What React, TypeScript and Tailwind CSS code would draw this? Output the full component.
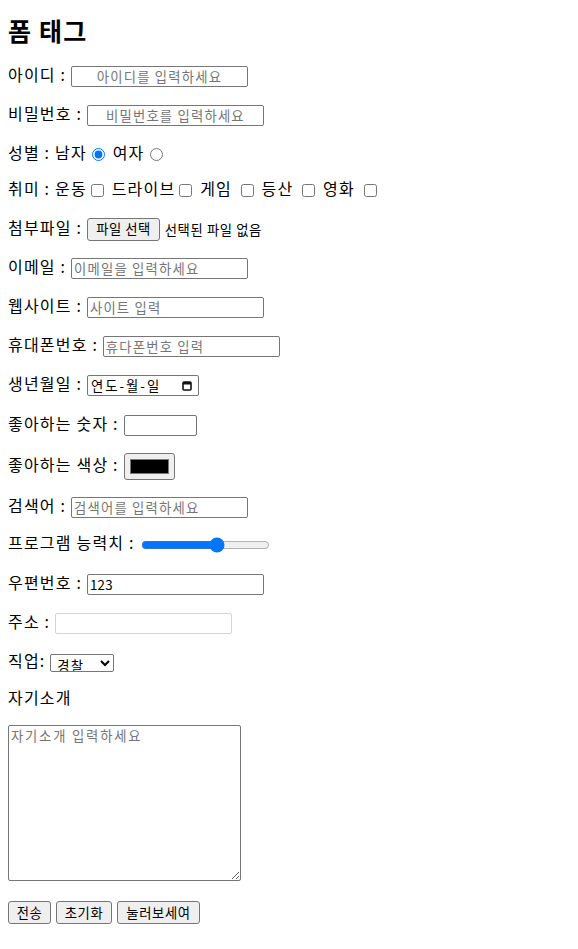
import React from 'react';

const field =
  'align-middle h-[21px] border border-[#767676] rounded-[2px] px-[2px] text-[13.33px] leading-[17px] bg-white placeholder:text-[#757575]';
const btn =
  'align-middle h-[23px] px-[6px] border border-[#767676] rounded-[3px] bg-[#efefef] text-[13.33px] leading-[19px]';
const row = 'h-6 leading-6 whitespace-nowrap';
const check = 'align-middle w-[13px] h-[13px] ml-[4px] mr-[3px]';
const radio = 'align-middle w-[13px] h-[13px] ml-[5px] mr-[3px]';

function CalendarIcon() {
  return (
    <svg width="10" height="11" viewBox="0 0 10 11" className="inline-block">
      <rect x="1" y="2" width="8" height="8" rx="1" fill="none" stroke="#111" strokeWidth="1.6" />
      <rect x="1" y="2" width="8" height="2.5" fill="#111" />
    </svg>
  );
}

export default function App() {
  return (
    <div className="min-h-[949px] bg-white px-2 text-[16px] tracking-[1.2px] text-black font-['Noto_Sans_CJK_KR','Noto_Sans',sans-serif]">
      <h1 className="pt-[15px] text-[25px] font-bold leading-[30px]">폼 태그</h1>

      <form onSubmit={(e) => e.preventDefault()}>
        {/* 텍스트 입력 */}
        <div className={`${row} mt-[17px]`}>
          아이디 :{' '}
          <input className={`${field} w-[177px] text-center`} placeholder="아이디를 입력하세요" />
        </div>
        <div className={`${row} mt-[15px]`}>
          비밀번호 :{' '}
          <input type="password" className={`${field} w-[177px] text-center`} placeholder="비밀번호를 입력하세요" />
        </div>

        {/* 선택 */}
        <div className={`${row} mt-[15px]`}>
          성별 : 남자
          <input type="radio" name="gender" defaultChecked className={radio} /> 여자
          <input type="radio" name="gender" className={radio} />
        </div>
        <div className={`${row} mt-[12px]`}>
          취미 : 운동<input type="checkbox" className={check} /> 드라이브
          <input type="checkbox" className={check} /> 게임 <input type="checkbox" className={check} /> 등산{' '}
          <input type="checkbox" className={check} /> 영화 <input type="checkbox" className={check} />
        </div>
        <div className={`${row} mt-[15px]`}>
          첨부파일 :{' '}
          <span className={`${btn} inline-block h-[22px] w-[73px] text-center tracking-[0.5px]`}>파일 선택</span>{' '}
          <span className="align-middle text-[13.33px] tracking-[0.6px]">선택된 파일 없음</span>
        </div>

        {/* 형식 입력 */}
        <div className={`${row} mt-[15px]`}>
          이메일 :{' '}
          <input type="email" className={`${field} w-[177px]`} placeholder="이메일을 입력하세요" />
        </div>
        <div className={`${row} mt-[15px]`}>
          웹사이트 :{' '}
          <input type="url" className={`${field} w-[177px]`} placeholder="사이트 입력" />
        </div>
        <div className={`${row} mt-[15px]`}>
          휴대폰번호 :{' '}
          <input type="tel" className={`${field} w-[177px]`} placeholder="휴다폰번호 입력" />
        </div>
        <div className={`${row} mt-[15px]`}>
          생년월일 :{' '}
          <span className={`${field} inline-flex w-[112px] items-center justify-between pl-[3px] pr-[6px] tracking-[2px]`}>
            <span>연도-월-일</span>
            <CalendarIcon />
          </span>
        </div>
        <div className={`${row} mt-[16px]`}>
          좋아하는 숫자 : <input type="number" className={`${field} w-[73px]`} />
        </div>
        <div className={`${row} mt-[17px]`}>
          좋아하는 색상 :{' '}
          <span className="inline-flex h-[27px] w-[51px] items-center justify-center rounded-[3px] border border-[#767676] bg-[#efefef] align-middle">
            <span className="h-[15px] w-[39px] border border-[#777] bg-black" />
          </span>
        </div>
        <div className={`${row} mt-[17px]`}>
          검색어 :{' '}
          <input type="search" className={`${field} w-[177px]`} placeholder="검색어를 입력하세요" />
        </div>
        <div className={`${row} mt-[13px]`}>
          프로그램 능력치 :{' '}
          <input type="range" defaultValue={60} className="align-middle mx-[2px] w-[129px] accent-[#0075ff]" />
        </div>
        <div className={`${row} mt-[16px]`}>
          우편번호 : <input className={`${field} w-[177px] tracking-[0.3px]`} defaultValue="123" />
        </div>
        <div className={`${row} mt-[15px]`}>
          주소 :{' '}
          <input disabled className={`${field} w-[177px] border-[#d4d4d4] bg-[#f8f8f8]`} />
        </div>
        <div className={`${row} mt-[15px]`}>
          직업:{' '}
          <select
            defaultValue="경찰"
            className="align-middle h-[18px] w-[64px] rounded-[2px] border border-[#767676] bg-white py-0 pl-[2px] text-[13.33px] leading-[14px]"
          >
            <option>경찰</option>
            <option>소방관</option>
            <option>교사</option>
          </select>
        </div>

        {/* 자기소개 */}
        <div className={`${row} mt-[13px]`}>자기소개</div>
        <textarea
          className="mt-[16px] block h-[156px] w-[233px] rounded-[2px] border border-[#767676] px-[2px] py-[1px] text-[13.33px] leading-[17px] tracking-[1.8px] placeholder:text-[#757575]"
          placeholder="자기소개 입력하세요"
        />

        <div className="mt-[20px] flex gap-[5px] tracking-[0.6px]">
          <button type="submit" className={`${btn} w-[43px]`}>전송</button>
          <button type="reset" className={`${btn} w-[56px]`}>초기화</button>
          <button type="button" className={`${btn} w-[83px]`}>눌러보세여</button>
        </div>
      </form>
    </div>
  );
}
